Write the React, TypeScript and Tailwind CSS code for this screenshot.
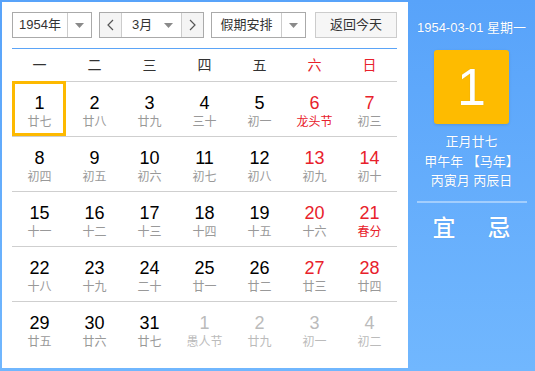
import React from "react";

type Day = { d: number; l: string; red?: boolean; lred?: boolean; other?: boolean };

const rows: Day[][] = [
  [
    { d: 1, l: "廿七" },
    { d: 2, l: "廿八" },
    { d: 3, l: "廿九" },
    { d: 4, l: "三十" },
    { d: 5, l: "初一" },
    { d: 6, l: "龙头节", red: true, lred: true },
    { d: 7, l: "初三", red: true },
  ],
  [
    { d: 8, l: "初四" },
    { d: 9, l: "初五" },
    { d: 10, l: "初六" },
    { d: 11, l: "初七" },
    { d: 12, l: "初八" },
    { d: 13, l: "初九", red: true },
    { d: 14, l: "初十", red: true },
  ],
  [
    { d: 15, l: "十一" },
    { d: 16, l: "十二" },
    { d: 17, l: "十三" },
    { d: 18, l: "十四" },
    { d: 19, l: "十五" },
    { d: 20, l: "十六", red: true },
    { d: 21, l: "春分", red: true, lred: true },
  ],
  [
    { d: 22, l: "十八" },
    { d: 23, l: "十九" },
    { d: 24, l: "二十" },
    { d: 25, l: "廿一" },
    { d: 26, l: "廿二" },
    { d: 27, l: "廿三", red: true },
    { d: 28, l: "廿四", red: true },
  ],
  [
    { d: 29, l: "廿五" },
    { d: 30, l: "廿六" },
    { d: 31, l: "廿七" },
    { d: 1, l: "愚人节", other: true },
    { d: 2, l: "廿九", other: true },
    { d: 3, l: "初一", other: true },
    { d: 4, l: "初二", other: true },
  ],
];

const weekdays = ["一", "二", "三", "四", "五", "六", "日"];

const font = { fontFamily: '"Liberation Sans", Arial, "Noto Sans CJK SC", sans-serif' };

function Caret() {
  return (
    <svg width="9" height="5" viewBox="0 0 9 5">
      <path d="M0 0 L9 0 L4.5 5 Z" fill="#8a8a8a" />
    </svg>
  );
}

function Chevron({ dir }: { dir: "l" | "r" }) {
  return (
    <svg width="7" height="12" viewBox="0 0 7 12">
      <path
        d={dir === "l" ? "M6 1 L1 6 L6 11" : "M1 1 L6 6 L1 11"}
        fill="none"
        stroke="#555"
        strokeWidth="1.2"
      />
    </svg>
  );
}

export default function App() {
  return (
    <div
      className="w-[535px] h-[371px] flex bg-gradient-to-b from-[#58a3fa] to-[#71b7fe] text-[#333]"
      style={font}
    >
      <div className="ml-[2px] mt-[2px] w-[406px] h-[366px] bg-white px-[10px] pt-[10px]">
        {/* controls */}
        <div className="flex h-[26px] text-[13px]">
          <div className="flex w-[80px] border border-[#aaa] bg-white">
            <div className="flex-1 flex items-center justify-center">1954年</div>
            <div className="w-[24px] border-l border-[#ccc] flex items-center justify-center">
              <Caret />
            </div>
          </div>
          <div className="ml-[7px] flex w-[105px] border border-[#aaa]">
            <div className="w-[22px] bg-[#f4f4f4] border-r border-[#ccc] flex items-center justify-center">
              <Chevron dir="l" />
            </div>
            <div className="flex-1 flex items-center pl-[10px] justify-between pr-[8px] bg-white">
              <span>3月</span>
              <Caret />
            </div>
            <div className="w-[22px] bg-[#f4f4f4] border-l border-[#ccc] flex items-center justify-center">
              <Chevron dir="r" />
            </div>
          </div>
          <div className="ml-[7px] flex w-[95px] border border-[#aaa]">
            <div className="flex-1 flex items-center justify-center">假期安排</div>
            <div className="w-[24px] border-l border-[#ccc] flex items-center justify-center">
              <Caret />
            </div>
          </div>
          <div className="ml-[9px] w-[82px] border border-[#ccc] bg-[#f6f6f6] flex items-center justify-center">
            返回今天
          </div>
        </div>

        {/* header */}
        <div className="mt-[10px] border-t border-[#5ba4f7] grid grid-cols-7 w-[385px] h-[34px] border-b border-b-[#cfcfcf] text-[14px]">
          {weekdays.map((w, i) => (
            <div
              key={w}
              className={`flex items-center justify-center ${i >= 5 ? "text-[#e8212b]" : "text-[#333]"}`}
            >
              {w}
            </div>
          ))}
        </div>

        {/* body */}
        <div className="w-[385px]">
          {rows.map((row, ri) => (
            <div
              key={ri}
              className={`grid grid-cols-7 h-[55px] ${ri < 4 ? "border-b border-[#cfcfcf]" : ""}`}
            >
              {row.map((c, ci) => {
                const sel = ri === 0 && ci === 0;
                const numColor = c.other ? "text-[#bbb]" : c.red ? "text-[#e8212b]" : "text-black";
                const lColor = c.other
                  ? "text-[#bbb]"
                  : c.lred
                  ? "text-[#e8212b]"
                  : "text-[#999]";
                return (
                  <div key={ci} className="relative flex flex-col items-center pt-[10px]">
                    {sel && (
                      <div className="absolute left-0 top-[-1px] w-[54px] h-[55px] border-[3px] border-[#fdb900]" />
                    )}
                    <div className={`text-[18px] leading-[22px] ${numColor}`}>{c.d}</div>
                    <div className={`text-[12px] leading-[16px] ${lColor}`}>{c.l}</div>
                  </div>
                );
              })}
            </div>
          ))}
        </div>
      </div>

      {/* right panel */}
      <div
        className="flex-1 flex flex-col items-center text-white"
        style={{ textShadow: "0 0 1px rgba(0,60,140,0.25)" }}
      >
        <div className="mt-[20px] text-[13px] leading-[16px] whitespace-nowrap">1954-03-01 星期一</div>
        <div className="mt-[14px] w-[75px] h-[74px] rounded-[3px] bg-[#febb00] flex items-center justify-center text-[52px] font-light leading-none shadow-[0_1px_3px_rgba(0,0,0,0.12)]">
          1
        </div>
        <div className="mt-[8px] text-[13px] leading-[20px]">正月廿七</div>
        <div className="text-[13px] leading-[20px] whitespace-nowrap">甲午年 【马年】</div>
        <div className="text-[13px] leading-[18px] whitespace-nowrap">丙寅月 丙辰日</div>
        <div className="mt-[11px] w-[110px] h-[2px] bg-white/40" />
        <div className="mt-[12px] flex gap-[32px] text-[23px] leading-[26px] font-medium">
          <span>宜</span>
          <span>忌</span>
        </div>
      </div>
    </div>
  );
}
